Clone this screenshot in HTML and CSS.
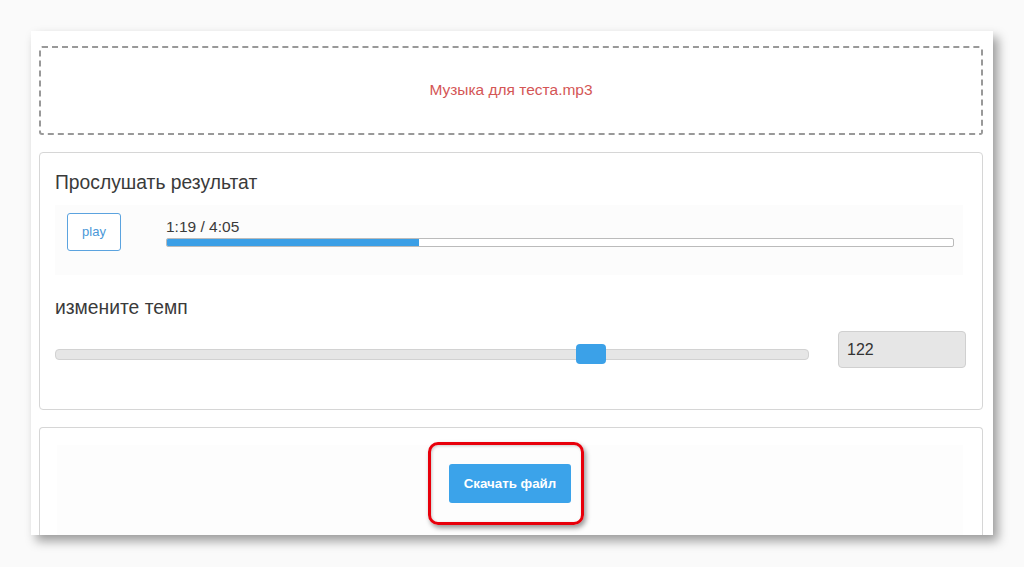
FILE: index.html
```html
<!DOCTYPE html>
<html lang="ru">
<head>
<meta charset="utf-8">
<title>Скачать файл</title>
<link rel="stylesheet" href="styles.css">
</head>
<body>
<div class="panel">
  <div class="drop">Музыка для теста.mp3</div>
  <div class="card card-main">
    <div class="title">Прослушать результат</div>
    <div class="player">
      <div class="player-btn"><button class="play">play</button></div>
      <div class="player-track">
        <div class="time">1:19 / 4:05</div>
        <div class="progress"><div class="progress-fill" style="width:32.1%"></div></div>
      </div>
    </div>
    <div class="title title-tempo">измените темп</div>
    <div class="tempo">
      <div class="slider"><div class="thumb"></div></div>
      <div class="value">122</div>
    </div>
  </div>
  <div class="card card-dl">
    <div class="dl-inner">
      <div class="dl-wrap">
        <span class="highlight"></span>
        <button class="download">Скачать файл</button>
      </div>
    </div>
  </div>
</div>
</body>
</html>
```
FILE: styles.css
```css
html, body {
  margin: 0;
  padding: 0;
}
body {
  background: #fafafa;
  font-family: "Liberation Sans", Arial, sans-serif;
  color: #333;
  width: 1024px;
  height: 567px;
  overflow: hidden;
}
.panel {
  margin: 31px 0 0 31px;
  width: 962px;
  height: 504px;
  background: #fff;
  box-shadow: 5px 6px 10px rgba(0, 0, 0, 0.38);
  box-sizing: border-box;
  padding: 15px 10px 0 8px;
  overflow: hidden;
  display: flex;
  flex-direction: column;
  gap: 17px;
}
.drop {
  height: 89px;
  box-sizing: border-box;
  border: 2px dashed #999;
  border-radius: 3px;
  display: flex;
  align-items: center;
  justify-content: center;
  color: #d45656;
  font-size: 15.5px;
  padding-bottom: 2px;
}
.card {
  border: 1px solid #d6d6d6;
  border-radius: 4px;
  box-sizing: border-box;
  background: #fff;
}
.card-main {
  height: 258px;
  padding: 20px 16px 0 15px;
}
.title {
  font-size: 19.3px;
  line-height: 20px;
  color: #3a3a3a;
}
.player {
  margin-top: 12px;
  height: 70px;
  display: flex;
  background: #fcfcfc;
  margin-right: 3px;
}
.player-btn {
  width: 97px;
  padding: 8px 0 0 12px;
  box-sizing: border-box;
}
.play {
  width: 54px;
  height: 38px;
  border: 1px solid #5ba3df;
  border-radius: 3px;
  background: #fff;
  color: #4a98d8;
  font-family: "Liberation Sans", Arial, sans-serif;
  font-size: 13px;
  padding: 0 0 2px;
}
.player-track {
  flex: 1;
  padding: 13px 9px 0 14px;
}
.time {
  font-size: 15.5px;
  line-height: 17px;
  color: #3a3a3a;
}
.progress {
  margin-top: 3px;
  height: 9px;
  border: 1px solid #bbb;
  border-radius: 2px;
  box-sizing: border-box;
  background: #fff;
  overflow: hidden;
}
.progress-fill {
  height: 100%;
  background: #3b9fe6;
}
.title-tempo {
  margin-top: 23px;
}
.tempo {
  margin-top: 13px;
  display: flex;
  align-items: center;
  gap: 29px;
  padding-right: 0;
}
.slider {
  position: relative;
  flex: 1;
  height: 11px;
  background: #e6e6e6;
  border: 1px solid #d2d2d2;
  border-radius: 4px;
  box-sizing: border-box;
  margin-top: 10px;
}
.thumb {
  position: absolute;
  left: 520px;
  top: -6px;
  width: 30px;
  height: 20px;
  background: #3ba1e8;
  border-radius: 4px;
}
.value {
  width: 128px;
  height: 37px;
  box-sizing: border-box;
  background: #e6e6e6;
  border: 1px solid #d0d0d0;
  border-radius: 4px;
  font-size: 16px;
  line-height: 35px;
  padding-left: 8px;
  color: #333;
}
.card-dl {
  flex: 1;
  border-bottom: none;
  border-radius: 4px 4px 0 0;
  padding: 17px 19px 0 17px;
}
.dl-inner {
  height: 100%;
  background: #fdfdfd;
  display: flex;
  justify-content: center;
  padding-top: 19px;
  box-sizing: border-box;
}
.dl-wrap {
  position: relative;
  height: 39px;
}
.download {
  position: relative;
  width: 122px;
  height: 39px;
  border: none;
  border-radius: 3px;
  background: #3ba3ea;
  color: #fff;
  font-family: "Liberation Sans", Arial, sans-serif;
  font-size: 13.3px;
  font-weight: bold;
  padding: 0;
}
.highlight {
  position: absolute;
  left: -21px;
  right: -13px;
  top: -22px;
  bottom: -22px;
  border: 3px solid #e8000b;
  border-radius: 10px;
  box-shadow: 2px 3px 5px rgba(0, 0, 0, 0.4), inset 1px 1px 3px rgba(0, 0, 0, 0.2);
}
```
